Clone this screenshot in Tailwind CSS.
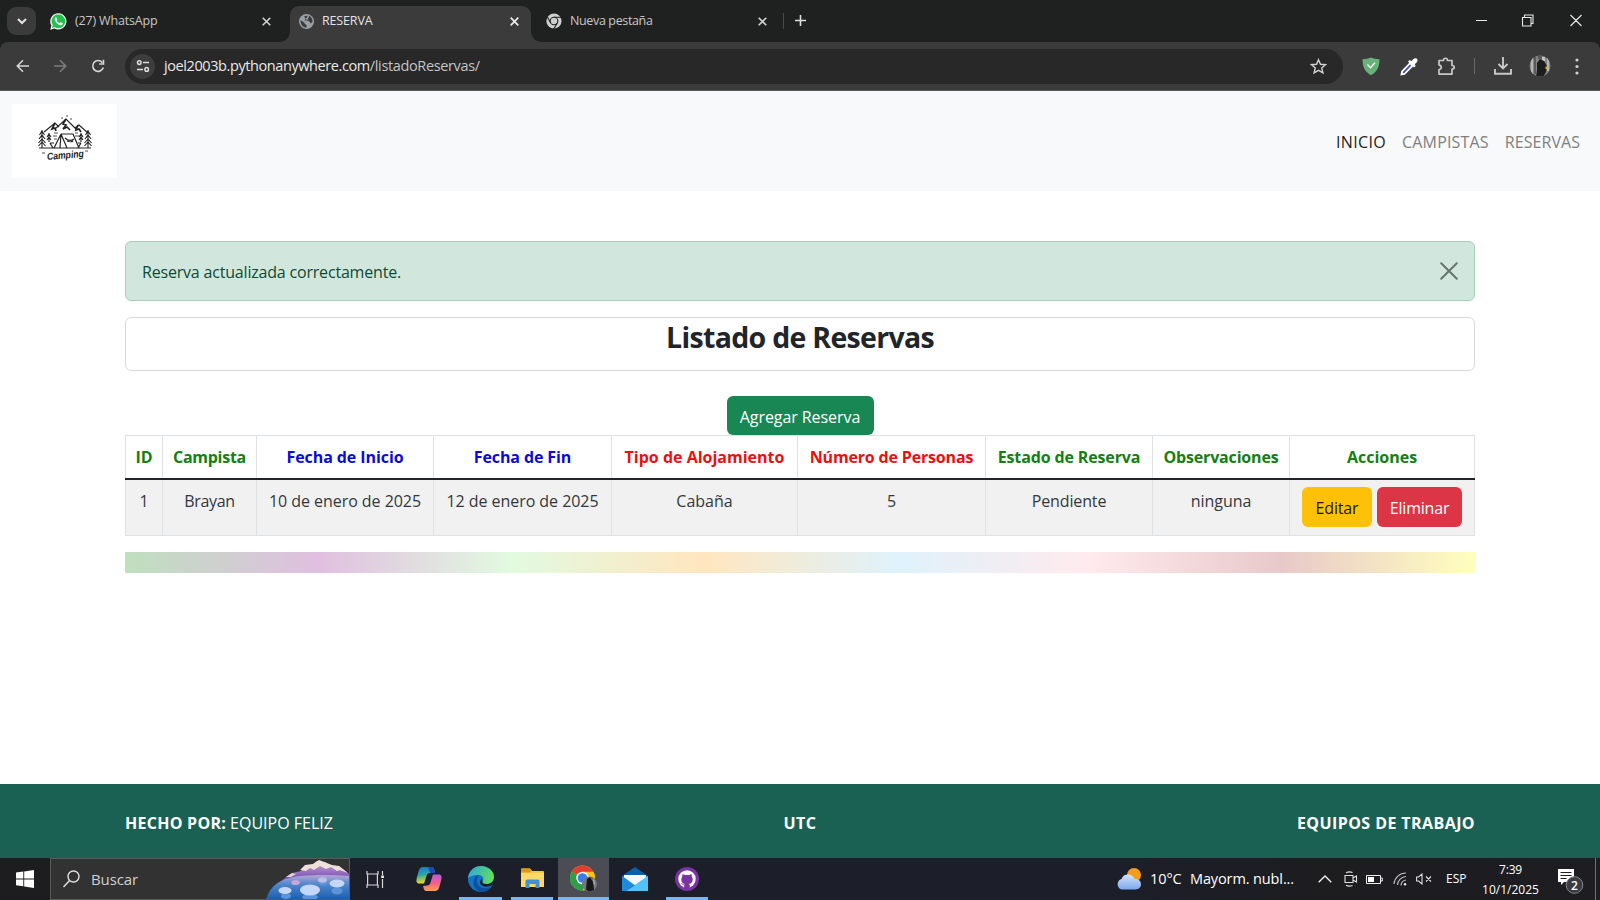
<!DOCTYPE html>
<html lang="es">
<head>
<meta charset="utf-8">
<title>RESERVA</title>
<script src="https://cdn.jsdelivr.net/npm/@tailwindcss/browser@4"></script>
</head>
<body class="w-[1600px] h-[900px] overflow-hidden bg-white flex flex-col font-['Open_Sans','Noto_Sans',sans-serif] text-[16px] text-[#212529] whitespace-nowrap">

<!-- Tab strip -->
<div class="h-[42px] shrink-0 bg-[#1f2120] flex items-start text-[12.5px] text-[#c7c7c7]">
  <div class="ml-[7px] mt-[7px] w-[29px] h-[28px] rounded-[9px] bg-[#3b3b3b] flex items-center justify-center">
    <svg class="w-[10px] h-[10px]" viewBox="0 0 10 10" fill="none" stroke="#e3e3e3" stroke-width="2"><path d="M1 3l4 4 4-4"/></svg>
  </div>
  <div class="w-[254px] h-[42px] flex items-center pl-[14px] pr-[19px]">
    <svg class="w-[17px] h-[17px] shrink-0" viewBox="0 0 17 17"><path d="M.3 16.700l1.100-4.100A8.100 8.100 0 1 1 4.600 15.600z" fill="#fff"/><path d="M1.900 15.100l.8-2.900A6.900 6.900 0 1 1 5 14.300z" fill="#25c04f"/><path d="M6 4.300c-.3 0-1.300.6-1.200 2 .1 2.300 3.200 5.500 5.700 5.900 1.300.2 2.200-.8 2.200-1.900 0-.3-1.800-1.200-2.100-1.100-.4.1-.7 1-1 1-.8-.1-2.900-2-3-2.700 0-.3.8-.8.7-1.200-.1-.4-.8-2-1.300-2z" fill="#fff"/></svg>
    <span class="ml-[8px] tracking-[-0.17px]">(27) WhatsApp</span>
    <svg class="ml-auto w-[9px] h-[9px]" viewBox="0 0 9 9" stroke="#d0d0d0" stroke-width="1.600"><path d="M.7.7l7.600 7.600M8.300.7L.7 8.300"/></svg>
  </div>
  <div class="mt-[6px] w-[241px] h-[36px] rounded-t-[9px] bg-[#3b3b3b] flex items-center pl-[9px] pr-[12px] pb-[6px] relative text-[#e3e3e3]">
    <div class="absolute bottom-0 -left-[10px] w-[10px] h-[10px] bg-[radial-gradient(circle_at_0_0,#1f2120_9.5px,#3b3b3b_10px)]"></div>
    <div class="absolute bottom-0 -right-[10px] w-[10px] h-[10px] bg-[radial-gradient(circle_at_100%_0,#1f2120_9.5px,#3b3b3b_10px)]"></div>
    <svg class="w-[15px] h-[15px] shrink-0" viewBox="0 0 15 15"><circle cx="7.500" cy="7.500" r="7.500" fill="#9aa0a6"/><path d="M1.500 6L5 8.500l1 1.500 1.500 1v2.500C4 13.500 1.500 11 1.500 6zM5 2.500L8.500 1.500 8 3.500 6.500 5 5.500 6.500H8l2.500 1 1 2 2-1.500c.3-3-1.500-5.500-3.500-6.200l-.5 2.200L8 6.500" fill="#3b3b3b"/></svg>
    <span class="ml-[8px] tracking-[-0.15px]">RESERVA</span>
    <svg class="ml-auto w-[9px] h-[9px]" viewBox="0 0 9 9" stroke="#e8e8e8" stroke-width="1.800"><path d="M.7.7l7.600 7.600M8.300.7L.7 8.300"/></svg>
  </div>
  <div class="w-[252px] h-[42px] flex items-center pl-[15px] pr-[16px]">
    <svg class="w-[16px] h-[16px] shrink-0" viewBox="0 0 16 16"><circle cx="8" cy="8" r="7.600" fill="#cfcfcf"/><g fill="none" stroke="#1f2120" stroke-width="1.100"><circle cx="8" cy="8" r="3.800"/><path d="M8 4.200h7M4.700 9.900L1.300 3.800M11.300 9.900L7.800 16"/></g></svg>
    <span class="ml-[8px] tracking-[-0.36px]">Nueva pestaña</span>
    <svg class="ml-auto w-[9px] h-[9px]" viewBox="0 0 9 9" stroke="#d0d0d0" stroke-width="1.600"><path d="M.7.7l7.600 7.600M8.300.7L.7 8.300"/></svg>
  </div>
  <div class="mt-[13px] w-px h-[16px] bg-[#4a4a4a]"></div>
  <svg class="ml-[11px] mt-[15px] w-[11px] h-[11px]" viewBox="0 0 11 11" stroke="#dcdcdc" stroke-width="1.600"><path d="M5.500 0v11M0 5.500h11"/></svg>
  <div class="ml-auto mr-[18px] mt-[14px] flex items-center h-[13px]">
    <svg class="w-[106px] h-[13px]" viewBox="0 0 106 13" fill="none" stroke="#eaeaea" stroke-width="1.100"><path d="M0 6.500h11M46.500 3.500h8.500V12h-8.500zM48.500 3V1H57v8.500h-2M94.500 1l11 11M105.500 1l-11 11"/></svg>
  </div>
</div>

<!-- Toolbar -->
<div class="h-[49px] shrink-0 bg-[#1f2120]">
<div class="h-[49px] rounded-t-[8px] bg-[#3b3b3b] border-b border-[#5a5856] flex items-center">
  <svg class="ml-[15px] w-[92px] h-[16px]" viewBox="0 0 92 16" fill="none" stroke-width="1.600"><path d="M14 8H2.500M8 2.300L2.300 8 8 13.700" stroke="#d5d5d5"/><path d="M39 8h11.500M45 2.300L50.700 8 45 13.700" stroke="#7d7d7d"/><path d="M87.300 4.500A5.400 5.400 0 1 0 88.300 9.500M88.500 1.800V6h-4.300" stroke="#d5d5d5"/></svg>
  <div class="ml-[18px] w-[1218px] h-[35px] rounded-full bg-[#282828] flex items-center pl-[5px] pr-[16px]">
    <div class="w-[25px] h-[25px] rounded-full bg-[#3d3d3d] flex items-center justify-center">
      <svg class="w-[14px] h-[14px]" viewBox="0 0 14 14" fill="none" stroke="#dedede" stroke-width="1.500"><circle cx="3.300" cy="3.600" r="1.800"/><path d="M7 3.600h6M1 10.400h6"/><circle cx="10.700" cy="10.400" r="1.800"/></svg>
    </div>
    <span class="ml-[9px] text-[14.5px] text-[#e8e8e8] tracking-[-0.41px]">joel2003b.pythonanywhere.com</span><span class="text-[14.5px] text-[#c4c4c4] tracking-[-0.36px]">/listadoReservas/</span>
    <svg class="ml-auto w-[17px] h-[17px]" viewBox="0 0 17 17" fill="none" stroke="#d0d0d0" stroke-width="1.400"><path d="M8.500 1.700l2 4.600 5 .4-3.800 3.300 1.200 4.900-4.400-2.600-4.400 2.600L5.300 10 1.500 6.700l5-.4z"/></svg>
  </div>
  <svg class="ml-[19px] w-[18px] h-[19px]" viewBox="0 0 18 19"><path d="M9 .5c2.500 1.200 5.500 1.700 8.500 1.700 0 7-2 12.500-8.500 16C2.500 14.700.5 9.200.5 2.200 3.500 2.200 6.500 1.700 9 .5z" fill="#67b279"/><path d="M5.500 7.500l3 3.200 4.500-5" fill="none" stroke="#fff" stroke-width="1.300"/></svg>
  <svg class="ml-[20px] w-[18px] h-[19px]" viewBox="0 0 18 19"><path d="M1.500 17.500l.6-3L10 6.200l2.500 2.500-8 8.300z" fill="#3f51b5" stroke="#fff" stroke-width="1.800"/><path d="M8 4.500l1.800-1.500 1.500 1.200L13.500 2c1-1.200 2.800-1 3.500-.2s.9 2.300-.2 3.400L14.700 7.200 15.700 9l-1.700 1.500z" fill="#fff"/></svg>
  <svg class="ml-[19px] w-[19px] h-[19px]" viewBox="0 0 19 19" fill="none" stroke="#c8c8c8" stroke-width="1.700"><path d="M2 3.500h4.500c0-3 4-3 4 0H15v5c3 0 3 3.600 0 3.600v5H2v-4.600c3-.2 3-4.200 0-4.400z" stroke-linejoin="round"/></svg>
  <div class="ml-[18px] w-px h-[16px] bg-[#6a6a6a]"></div>
  <svg class="ml-[19px] w-[18px] h-[18px]" viewBox="0 0 18 18" fill="none" stroke="#c8c8c8" stroke-width="1.900"><path d="M9 0v11.500M4.500 7L9 11.500 13.500 7M1 12v4.800h16V12"/></svg>
  <svg class="ml-[17px] w-[22px] h-[22px]" viewBox="0 0 22 22"><clipPath id="av"><circle cx="11" cy="11" r="10.500"/></clipPath><g clip-path="url(#av)"><path d="M0 0h22v22H0z" fill="#858585"/><path d="M2 3h2v16H2zM18 2h2v14h-2z" fill="#b5b5b5"/><path d="M5 1h2v18H5zM9 0h4v4H9z" fill="#5a5a5a"/><path d="M13 2h3v4h-3z" fill="#c4c4c4"/><path d="M8 8l3-4 4 2 3 5-1 6-3 5H7l1-7z" fill="#1d1d1d"/><path d="M16.500 11.500h2v2.500h-2z" fill="#d8bd1c"/></g></svg>
  <svg class="ml-[24px] w-[4px] h-[17px]" viewBox="0 0 4 17" fill="#d0d0d0"><circle cx="2" cy="2" r="1.600"/><circle cx="2" cy="8.500" r="1.600"/><circle cx="2" cy="15" r="1.600"/></svg>
</div>
</div>

<!-- Site navbar -->
<div class="h-[100px] shrink-0 bg-[#f8f9fb] flex items-center pl-[12px] pr-[20px]">
  <div class="w-[105px] h-[74px] bg-white flex items-center justify-center">
    <svg class="w-[56px] h-[48px] mt-[-4px]" viewBox="0 0 56 48" fill="none" stroke="#222" stroke-width="1.100">
      <path d="M7 17L18 8l4 4M18 14L29 4l11 11M38 13l4-3 9 8M2 33h52"/>
      <path d="M29 4l-3 5 3 1-3 4 4-2 3 3M18 8l-3 6 3-1 1 3M41 10l-2 5 3-1 2 3" stroke-width="1.700"/>
      <path d="M24 19h12l6 14M24 19l-7 14M24 19l-1 14M24 19l6 14M28 23c3 3 6 3 9 1M30 26c2 1 5 1 6 0M13 28l3 5M44 28l-3 5M13 28h4M41 28h3" stroke-width="1.200"/>
      <path d="M5 15v18M2.500 20L5 16l2.500 4M2 24l3-4 3 4M1.500 28L5 24l3.500 4M1.500 31L5 27l3.500 4M51 15v18M48.500 20l2.500-4 2.500 4M48 24l3-4 3 4M47.500 28l3.500-4 3.500 4M47.500 31l3.500-4 3.500 4M12 18v9M10 22l2-3 2 3M10 25l2-3 2 3M44 18v9M42 22l2-3 2 3M42 25l2-3 2 3"/>
      <path d="M30-1v3M25 2v2M34 3v2M17 18h4M16 21h4M17 24h3M38 18h3M38 21h4M5 38h3M48 36h3" stroke-width=".8"/>
      <text x="10" y="43.500" transform="rotate(-5 28 42)" font-family="Liberation Sans" font-style="italic" font-weight="700" font-size="10" textLength="37" lengthAdjust="spacingAndGlyphs" fill="#222" stroke="none">Camping</text>
    </svg>
  </div>
  <div class="ml-auto pt-[2px] flex gap-[16px] text-[#7e7f80]">
    <span class="text-[#1d1f21] tracking-[0.34px]">INICIO</span><span class="tracking-[0.18px]">CAMPISTAS</span><span class="tracking-[0.06px]">RESERVAS</span>
  </div>
</div>

<!-- Page content -->
<div class="h-[593px] shrink-0 px-[125px] pt-[50px] flex flex-col">
  <div class="h-[60px] shrink-0 rounded-[6px] border border-[#a9cfbf] bg-[#d1e7dd] flex items-center pl-[16px] pr-[16px] text-[#0f4a33]">
    <span class="pt-[2px] tracking-[-0.19px]">Reserva actualizada correctamente.</span>
    <svg class="ml-auto w-[18px] h-[18px] mt-[-1px]" viewBox="0 0 18 18" fill="none" stroke="#68736e" stroke-width="2" stroke-linecap="round"><path d="M1.200 1.200l15.600 15.600M16.800 1.200L1.200 16.800"/></svg>
  </div>
  <div class="mt-[16px] h-[54px] shrink-0 rounded-[6px] border border-[#d8dadc] text-center">
    <h1 class="text-[28.5px] leading-[39px] font-bold tracking-[-0.7px]">Listado de Reservas</h1>
  </div>
  <div class="mt-[25px] h-[39px] shrink-0 flex justify-center">
    <div class="w-[147px] h-[39px] rounded-[6px] bg-[#198754] text-white text-center leading-[42px] tracking-[-0.07px]">Agregar Reserva</div>
  </div>
  <table class="table-fixed border-collapse w-[1349px] text-center shrink-0">
    <colgroup><col class="w-[37px]"><col class="w-[94px]"><col class="w-[177px]"><col class="w-[178px]"><col class="w-[186px]"><col class="w-[188px]"><col class="w-[167px]"><col class="w-[137px]"><col class="w-[185px]"></colgroup>
    <thead><tr class="h-[43px] font-bold text-[#128012] border-b-2 border-b-[#212529] *:border-x *:border-t *:border-x-[#dfe2e5] *:border-t-[#dfe2e5] *:px-0 *:pb-0 *:pt-px">
      <td>ID</td><td class="tracking-[-0.27px]">Campista</td><td class="text-[#0a0adb] tracking-[-0.08px]">Fecha de Inicio</td><td class="text-[#0a0adb] tracking-[-0.1px]">Fecha de Fin</td><td class="text-[#ea1010]">Tipo de Alojamiento</td><td class="text-[#ea1010] tracking-[-0.17px]">Número de Personas</td><td class="tracking-[-0.14px]">Estado de Reserva</td><td class="tracking-[-0.17px]">Observaciones</td><td>Acciones</td>
    </tr></thead>
    <tbody><tr class="h-[57px] bg-[#f1f1f1] text-[#34383c] align-top *:border *:border-[#dfe2e5] *:border-t-0 *:pt-[9px] *:px-0">
      <td>1</td><td class="tracking-[-0.33px]">Brayan</td><td class="tracking-[-0.05px]">10 de enero de 2025</td><td class="tracking-[-0.05px]">12 de enero de 2025</td><td>Cabaña</td><td>5</td><td class="tracking-[-0.14px]">Pendiente</td><td class="tracking-[-0.05px]">ninguna</td>
      <td><div class="-mt-[2px] flex justify-center gap-[5px] leading-[42px]"><div class="w-[70px] h-[40px] rounded-[6px] bg-[#ffc107] text-[#1c1600] tracking-[-0.14px]">Editar</div><div class="w-[85px] h-[40px] rounded-[6px] bg-[#dc3545] text-white tracking-[-0.2px]">Eliminar</div></div></td>
    </tr></tbody>
  </table>
  <div class="mt-[16px] h-[21px] shrink-0 bg-[linear-gradient(to_right,#bfdfbf,#e0bfe0,#e2fae0,#ffe6bf,#dff2fb,#ffeaed,#e8c9c9,#ffffbf)]"></div>
</div>

<!-- Footer -->
<div class="h-[74px] shrink-0 bg-[#1b6153] text-white px-[125px] grid grid-cols-3 items-center">
  <div class="pt-[3px]"><b class="tracking-[0.26px]">HECHO POR:</b><span class="ml-[4px]">EQUIPO FELIZ</span></div>
  <div class="text-center pt-[3px]"><b class="tracking-[0.4px]">UTC</b></div>
  <div class="text-right pt-[3px]"><b class="tracking-[0.42px]">EQUIPOS DE TRABAJO</b></div>
</div>

<!-- Taskbar -->
<div class="h-[42px] shrink-0 bg-[#1c1e29] flex items-center text-white">
  <div class="w-[50px] h-full bg-[#1d1d1f] flex items-center justify-center">
    <svg class="w-[18px] h-[18px]" viewBox="0 0 18 18" fill="#fff"><path d="M0 2.600l7.300-1v6.900H0zM8.200 1.500L18 0v8.500H8.200zM0 9.400h7.300v6.900l-7.300-1zM8.200 9.400H18V18l-9.800-1.500z"/></svg>
  </div>
  <div class="w-[300px] h-full bg-[#323232] border border-[#5a5a5a] flex items-center pl-[12px] relative overflow-hidden">
    <svg class="w-[17px] h-[18px]" viewBox="0 0 17 18" fill="none" stroke="#e0e0e0" stroke-width="1.400"><circle cx="10.500" cy="6.500" r="5.500"/><path d="M6.600 10.500L.5 17"/></svg>
    <span class="ml-[11px] text-[15px] text-[#d0d0d0] tracking-[-0.12px]">Buscar</span>
    <svg class="absolute right-0 bottom-0 w-[83px] h-[40px]" viewBox="0 0 83 40">
      <defs><linearGradient id="mt" x2="0" y2="1"><stop stop-color="#c9a8d8"/><stop offset=".5" stop-color="#7d55b5"/><stop offset="1" stop-color="#9a7fd0"/></linearGradient><linearGradient id="wt" x2="0" y2="1"><stop stop-color="#b9a6d6"/><stop offset=".4" stop-color="#4d86cc"/><stop offset="1" stop-color="#1d5fae"/></linearGradient></defs>
      <path d="M10 27l10-9 6-4 9-2 5-5 6-1 5-4 8 1 7 4 7 0 10 8v20H10z" fill="url(#mt)"/><path d="M34 11l5-5 8-1 6-4 5 2 8 3 7 1 9 7-8-3-3 1-6-4-5 2-6-3-6 4-4-2-4 3z" fill="#efe0d8"/><path d="M20 18l6-4 4 1-5 3z" fill="#e6d2d6"/>
      <path d="M0 40c4-13 14-20 30-22.500 18-2 35-2 53-.5v23z" fill="url(#wt)"/>
      <g fill="#5f93d8"><ellipse cx="20" cy="37" rx="5" ry="3"/><ellipse cx="71" cy="32" rx="5.500" ry="3.500"/><ellipse cx="57" cy="24" rx="4" ry="2.500"/><ellipse cx="44" cy="38" rx="8" ry="3"/></g>
      <g fill="#c3d8f8"><ellipse cx="19" cy="31.500" rx="6.500" ry="3.600"/><ellipse cx="44" cy="31" rx="10" ry="5.500"/><ellipse cx="71" cy="24.500" rx="7.500" ry="4"/><ellipse cx="56.500" cy="21" rx="4.500" ry="2.800" fill="#b9c0e6"/><ellipse cx="29.500" cy="23.500" rx="4.200" ry="2.600" fill="#c9a6d8"/></g>
    </svg>
  </div>
  <svg class="ml-[16px] w-[18px] h-[17px]" viewBox="0 0 18 17" fill="none" stroke="#d5d5d5" stroke-width="1.200"><path d="M1 0v3h11V0M1 17v-3h11v3M1.600 3v11M11.400 3v11M16.500 0v4M16.500 8v9"/><path d="M15.300 4.500h2.500v2.500h-2.500z" fill="#fff" stroke="none"/></svg>
  <svg class="ml-[32px] w-[26px] h-[24px]" viewBox="0 0 26 24"><defs><linearGradient id="c1" x2=".2" y2="1"><stop stop-color="#1b6fd8"/><stop offset=".5" stop-color="#2aa8a8"/><stop offset="1" stop-color="#f2d91c"/></linearGradient><linearGradient id="c2" x2="0" y2="1"><stop stop-color="#b55be0"/><stop offset=".5" stop-color="#f0608a"/><stop offset="1" stop-color="#ffa04a"/></linearGradient></defs><path d="M7 0h8c3 0 3 2 4 5l-5 1c-2 0-3 1-3.500 3L8 16.500H3.500C0 16.500 0 14 1 10L3 3c.7-2 2-3 4-3z" fill="url(#c1)"/><path d="M11 0h4c3 0 3 2 4 6h-4c-2 0-2-6-4-6z" fill="#1c49b8"/><path d="M19 24h-8c-3 0-3-2-4-5l4-.5c2 0 3-1 3.500-3L17 7.500h5.500c3.500 0 3.500 2.500 2.500 6.500l-2 7c-.7 2-2 3-4 3z" fill="url(#c2)"/></svg>
  <div class="ml-[17px] w-[43px] h-full border-b-[3px] border-[#76b9ed] flex items-center justify-center pt-[2px]">
    <svg class="w-[26px] h-[26px]" viewBox="0 0 26 26"><defs><linearGradient id="e1" y2=".3"><stop stop-color="#2aa6e0"/><stop offset="1" stop-color="#5edb62"/></linearGradient></defs><circle cx="13" cy="13" r="13" fill="#1273c4"/><path d="M0 12C1 4.500 6.500 0 13 0c7.500 0 13 5 13 11 0 4.500-3.500 7-7.500 7-3 0-4.500-1-4-2 2-2.500 1-6.500-3.500-7C6 8.500 2 10 0 12z" fill="url(#e1)"/><path d="M11 9C8 12 8 17 11 20s9 3 13 0c-3 4.500-7 6-11 6-4-1-7.500-4.500-7.500-9S8 9.500 11 9z" fill="#0c4f9c"/><path d="M14.500 16c-.5 1 1 2 4 2 4 0 7-2 7.500-6v5l-2.500 2.500c-4 2-10 1.500-11.500-2.500 0-2 1-3.500 1.500-4.500z" fill="#1c1e29"/></svg>
  </div>
  <div class="ml-[9px] w-[42px] h-full border-b-[3px] border-[#76b9ed] flex items-center justify-center">
    <svg class="w-[23px] h-[20px]" viewBox="0 0 23 20"><path d="M0 1.500Q0 .500 1 .500h8l2 2.500h11q1 0 1 1V19H0z" fill="#f9c846"/><path d="M0 1.500Q0 .500 1 .500h8l2 2L9 4.500H0z" fill="#dc9a16"/><path d="M0 5h23v14H0z" fill="#ffd868"/><path d="M4.500 20v-7q0-1.500 1.500-1.500h11q1.500 0 1.500 1.500v7h-4v-4h-6v4z" fill="#3f93d2"/></svg>
  </div>
  <div class="ml-[5px] w-[51px] h-full bg-[#4b4c54] border-b-[3px] border-[#76b9ed] flex items-center justify-center pt-[2px]">
    <svg class="w-[27px] h-[27px]" viewBox="0 0 27 27"><circle cx="12.500" cy="13" r="12.500" fill="#fbc116"/><path d="M12.500 13L1.700 6.700A12.500 12.500 0 0 1 23.300 6.700z" fill="#e33b2e"/><path d="M12.500 13L1.700 6.700A12.500 12.500 0 0 0 12.500 25.500L17 17z" fill="#2f9e4a"/><path d="M12.500 6.700H23.300L25 11H14z" fill="#fbc116"/><circle cx="12.500" cy="13" r="6.200" fill="#fff"/><circle cx="12.500" cy="13" r="4.800" fill="#3b7de8"/><circle cx="19.500" cy="19" r="7.500" fill="#77777a"/><path d="M17 14l3-2 3 5 1 8-5 1.500-3-2z" fill="#17171a"/><path d="M23 13.500l2 3v4l-1.500-2z" fill="#a8a8a8"/></svg>
  </div>
  <svg class="ml-[13px] w-[26px] h-[24px]" viewBox="0 0 26 24"><path d="M0 9L13 0l13 9v3H0z" fill="#0f5fa8"/><path d="M2 8h22v10H2z" fill="#f4f6f8"/><path d="M0 9l13 9.500L26 9v15H0z" fill="#2fa5e8"/><path d="M26 9L4 24h22z" fill="#50c4f6"/><path d="M0 9l13 9.500L4 24H0z" fill="#1f8ad8"/></svg>
  <div class="ml-[18px] w-[42px] h-full border-b-[3px] border-[#76b9ed] flex items-center justify-center pt-[2px]">
    <svg class="w-[24px] h-[24px]" viewBox="0 0 24 24"><circle cx="12" cy="12" r="12" fill="#7a34a0"/><circle cx="12" cy="12" r="8.700" fill="#fff"/><path d="M9.700 21v-3.300c-2 .4-2.700-1-3.200-1.700M14.300 21v-3.500" stroke="#7a34a0" stroke-width="1" fill="none"/><path d="M10 22v-5c-2.500-.5-3.700-2-3.700-4.500 0-1.200.4-2 1-2.700-.2-.8-.2-1.800.2-2.600 1 0 1.900.5 2.600 1.100 1.200-.3 2.600-.3 3.800 0 .7-.6 1.600-1.100 2.600-1.100.4.800.4 1.800.2 2.600.6.700 1 1.500 1 2.700 0 2.500-1.200 4-3.700 4.500v5z" fill="#7a34a0"/></svg>
  </div>

  <div class="ml-auto flex items-center h-full bg-[linear-gradient(to_right,#1c1e29,#1d1d20_40%,#1d1d22)]">
    <svg class="w-[26px] h-[22px]" viewBox="0 0 26 22"><defs><linearGradient id="cl" x2="0" y2="1"><stop stop-color="#d4e2fa"/><stop offset="1" stop-color="#7ba8ee"/></linearGradient></defs><circle cx="18" cy="7" r="7" fill="#f59c1a"/><path d="M5.500 21.500a5.500 5.500 0 0 1 0-10.500 7 7 0 0 1 13 0c4-.3 6.500 2 6.500 5.300s-2.500 5.200-5.500 5.200z" fill="url(#cl)"/></svg>
    <span class="ml-[8px] w-[32px] text-[14.5px] tracking-[-0.1px]">10°C</span><span class="ml-[8px] w-[104px] text-[14.5px] tracking-[-0.12px]">Mayorm. nubl...</span>
    <svg class="ml-[24px] w-[14px] h-[8px]" viewBox="0 0 14 8" fill="none" stroke="#eee" stroke-width="1.400"><path d="M.7 7.200L7 1l6.300 6.200"/></svg>
    <svg class="ml-[12px] w-[14px] h-[16px]" viewBox="0 0 14 16" fill="none" stroke="#ddd" stroke-width="1.100"><path d="M1 4.500h8v7H1zM9 7l3.500-2v6L9 9M2 1.800Q5 .2 8.500 1.500M2 14.300q3 1.500 6.500.2"/></svg>
    <svg class="ml-[8px] w-[17px] h-[9px]" viewBox="0 0 17 9"><path d="M.5.500h14v8H.5zM14.500 3h1.800v3h-1.800" fill="none" stroke="#eee"/><path d="M2 2h6v5H2z" fill="#fff"/></svg>
    <svg class="ml-[10px] w-[14px] h-[14px]" viewBox="0 0 14 14" fill="none" stroke="#bbb" stroke-width="1.200"><path d="M1 12A12 12 0 0 1 13 1M4.500 13A9 9 0 0 1 13 4.500M8 13.500A6 6 0 0 1 13 8"/><circle cx="12" cy="12.300" r="1.200" fill="#eee" stroke="none"/></svg>
    <svg class="ml-[9px] w-[16px] h-[12px]" viewBox="0 0 16 12" fill="none" stroke="#ddd" stroke-width="1.100"><path d="M.6 4h2L6 1v10L2.600 8h-2zM10 3.500l5 5M15 3.500l-5 5"/></svg>
    <span class="ml-[14px] w-[21px] text-[12px]">ESP</span>
    <div class="ml-[15px] w-[57px] text-[12px] leading-[20px] text-center pt-[1px]"><div class="tracking-[-0.19px]">7:39</div><div>10/1/2025</div></div>
    <svg class="ml-[18px] w-[27px] h-[27px] mt-[4px]" viewBox="0 0 27 27"><path d="M1 1h16v13H7l-3 3v-3H1z" fill="#fff"/><path d="M3.500 4.500h11M3.500 7.500h11M3.500 10.500h6" stroke="#1c1e29" stroke-width="1.200"/><circle cx="17.500" cy="17" r="8.300" fill="#3a3b42" stroke="#85868a"/><text x="17.500" y="21.500" text-anchor="middle" font-size="12" font-weight="600" fill="#fff">2</text></svg>
    <div class="ml-[11px] mr-[4px] w-px h-full bg-[#70717a]"></div>
  </div>
</div>
</body>
</html>
